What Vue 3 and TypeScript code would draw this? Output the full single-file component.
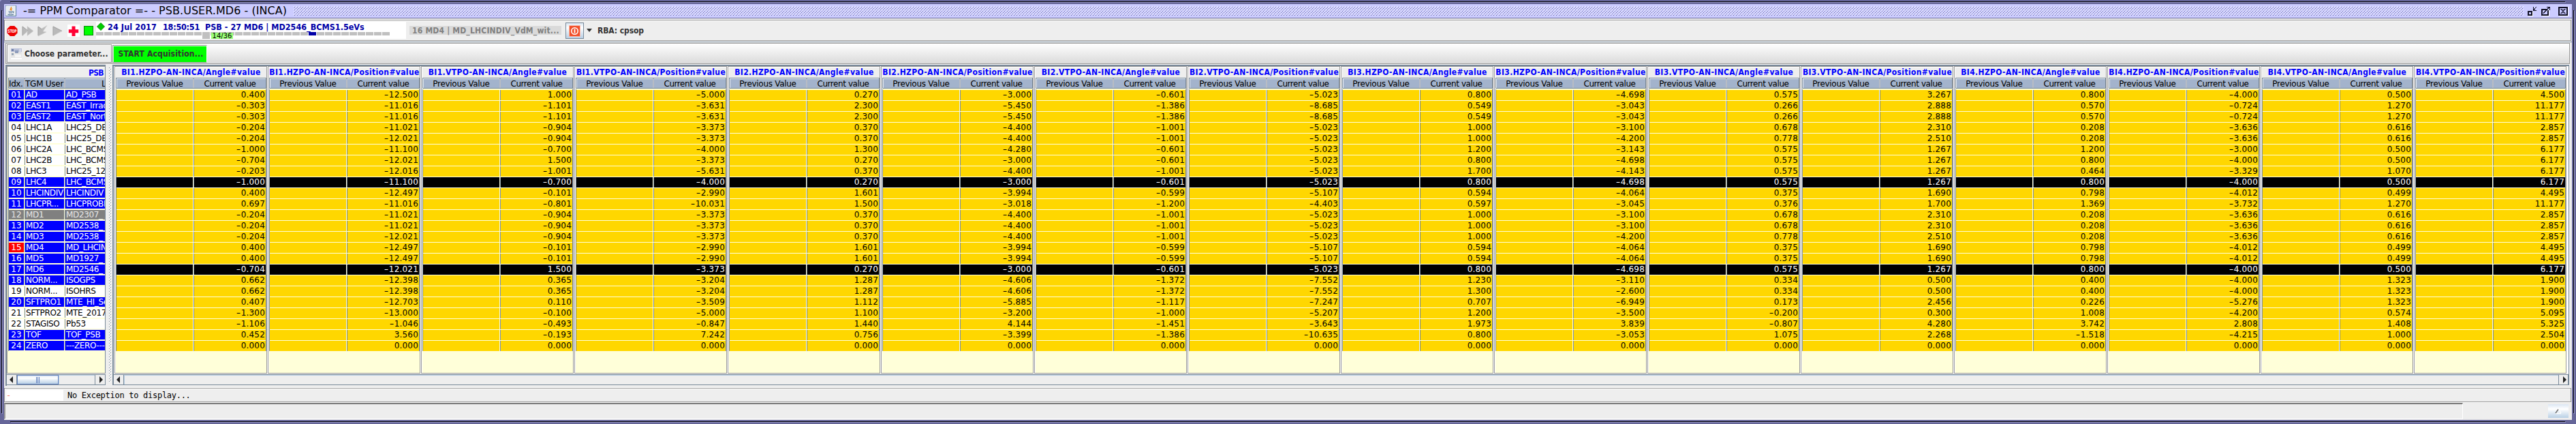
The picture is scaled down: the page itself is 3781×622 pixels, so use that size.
<script setup lang="ts">
interface User {
  idx: string
  name: string
  lsa: string
  tone: 'used' | 'free' | 'gray' | 'alert'
}
interface Panel {
  title: string
  values: { sign: string; digits: string }[]
}

const u = (idx: string, name: string, lsa: string, tone: User['tone'] = 'used'): User => ({ idx, name, lsa, tone })

const users: User[] = [
  u('01', 'AD', 'AD_PSB'),
  u('02', 'EAST1', 'EAST_Irrad'),
  u('03', 'EAST2', 'EAST_North'),
  u('04', 'LHC1A', 'LHC25_DB', 'free'),
  u('05', 'LHC1B', 'LHC25_DB', 'free'),
  u('06', 'LHC2A', 'LHC_BCMS', 'free'),
  u('07', 'LHC2B', 'LHC_BCMS', 'free'),
  u('08', 'LHC3', 'LHC25_12', 'free'),
  u('09', 'LHC4', 'LHC_BCMS'),
  u('10', 'LHCINDIV', 'LHCINDIV'),
  u('11', 'LHCPR...', 'LHCPROBE'),
  u('12', 'MD1', 'MD2307_', 'gray'),
  u('13', 'MD2', 'MD2538_'),
  u('14', 'MD3', 'MD2538_'),
  u('15', 'MD4', 'MD_LHCIN', 'alert'),
  u('16', 'MD5', 'MD1927_'),
  u('17', 'MD6', 'MD2546_'),
  u('18', 'NORM...', 'ISOGPS'),
  u('19', 'NORM...', 'ISOHRS', 'free'),
  u('20', 'SFTPRO1', 'MTE_HI_Se'),
  u('21', 'SFTPRO2', 'MTE_2017', 'free'),
  u('22', 'STAGISO', 'Pb53', 'free'),
  u('23', 'TOF', 'TOF_PSB'),
  u('24', 'ZERO', '---ZERO---'),
]

const columns: string[] = [
  '0.400 -0.303 -0.303 -0.204 -0.204 -1.000 -0.704 -0.203 -1.000 0.400 0.697 -0.204 -0.204 -0.204 0.400 0.400 -0.704 0.662 0.662 0.407 -1.300 -1.106 0.452 0.000',
  '-12.500 -11.016 -11.016 -11.021 -12.021 -11.100 -12.021 -12.016 -11.100 -12.497 -11.016 -11.021 -11.021 -12.021 -12.497 -12.497 -12.021 -12.398 -12.398 -12.703 -13.000 -1.046 3.560 0.000',
  '1.000 -1.101 -1.101 -0.904 -0.904 -0.700 1.500 -1.001 -0.700 -0.101 -0.801 -0.904 -0.904 -0.904 -0.101 -0.101 1.500 0.365 0.365 0.110 -0.100 -0.493 -0.193 0.000',
  '-5.000 -3.631 -3.631 -3.373 -3.373 -4.000 -3.373 -5.631 -4.000 -2.990 -10.031 -3.373 -3.373 -3.373 -2.990 -2.990 -3.373 -3.204 -3.204 -3.509 -5.000 -0.847 7.242 0.000',
  '0.270 2.300 2.300 0.370 0.370 1.300 0.270 0.370 0.270 1.601 1.500 0.370 0.370 0.370 1.601 1.601 0.270 1.287 1.287 1.112 1.100 1.440 0.756 0.000',
  '-3.000 -5.450 -5.450 -4.400 -4.400 -4.280 -3.000 -4.400 -3.000 -3.994 -3.018 -4.400 -4.400 -4.400 -3.994 -3.994 -3.000 -4.606 -4.606 -5.885 -3.200 4.144 -3.399 0.000',
  '-0.601 -1.386 -1.386 -1.001 -1.001 -0.601 -0.601 -1.001 -0.601 -0.599 -1.200 -1.001 -1.001 -1.001 -0.599 -0.599 -0.601 -1.372 -1.372 -1.117 -1.000 -1.451 -1.386 0.000',
  '-5.023 -8.685 -8.685 -5.023 -5.023 -5.023 -5.023 -5.023 -5.023 -5.107 -4.403 -5.023 -5.023 -5.023 -5.107 -5.107 -5.023 -7.552 -7.552 -7.247 -5.207 -3.643 -10.635 0.000',
  '0.800 0.549 0.549 1.000 1.000 1.200 0.800 1.700 0.800 0.594 0.597 1.000 1.000 1.000 0.594 0.594 0.800 1.230 1.300 0.707 1.200 1.973 0.800 0.000',
  '-4.698 -3.043 -3.043 -3.100 -4.200 -3.143 -4.698 -4.143 -4.698 -4.064 -3.045 -3.100 -3.100 -4.200 -4.064 -4.064 -4.698 -3.110 -2.600 -6.949 -3.500 3.839 -3.053 0.000',
  '0.575 0.266 0.266 0.678 0.778 0.575 0.575 0.575 0.575 0.375 0.376 0.678 0.678 0.778 0.375 0.375 0.575 0.334 0.334 0.173 -0.200 -0.807 1.075 0.000',
  '3.267 2.888 2.888 2.310 2.510 1.267 1.267 1.267 1.267 1.690 1.700 2.310 2.310 2.510 1.690 1.690 1.267 0.500 0.500 2.456 0.300 4.280 2.268 0.000',
  '0.800 0.570 0.570 0.208 0.208 1.200 0.800 0.464 0.800 0.798 1.369 0.208 0.208 0.208 0.798 0.798 0.800 0.400 0.400 0.226 1.008 3.742 -1.518 0.000',
  '-4.000 -0.724 -0.724 -3.636 -3.636 -3.000 -4.000 -3.329 -4.000 -4.012 -3.732 -3.636 -3.636 -3.636 -4.012 -4.012 -4.000 -4.000 -4.000 -5.276 -4.200 2.808 -4.215 0.000',
  '0.500 1.270 1.270 0.616 0.616 0.500 0.500 1.070 0.500 0.499 1.270 0.616 0.616 0.616 0.499 0.499 0.500 1.323 1.323 1.323 0.574 1.408 1.000 0.000',
  '4.500 11.177 11.177 2.857 2.857 6.177 6.177 6.177 6.177 4.495 11.177 2.857 2.857 2.857 4.495 4.495 6.177 1.900 1.900 1.900 5.095 5.325 2.504 0.000',
]

const panels: Panel[] = columns.map((c, i) => {
  const plane = i % 4 < 2 ? 'HZPO' : 'VTPO'
  const kind = i % 2 === 1 ? 'Position' : 'Angle'
  return {
    title: `BI${Math.floor(i / 4) + 1}.${plane}-AN-INCA/${kind}#value`,
    values: c.split(' ').map((v) => ({ sign: v.startsWith('-') ? '-' : '', digits: v.replace('-', '') })),
  }
})

const darkRows = [8, 16]
const cycles = Array.from({ length: 36 }, (_, i) => i)
</script>

<template>
  <div class="window">
    <svg class="frame" width="3781" height="622" shape-rendering="crispEdges">
      <path d="M15 2.5H3765M2.5 15V606M3777.5 15V606M15 618.5H3765" stroke="#000" fill="none" />
      <path d="M16 3.5H3766M3.5 16V607M3778.5 16V607M16 619.5H3766" stroke="#9999cc" fill="none" />
      <path d="M0 0.5H2M0.5 0V2" stroke="#9999cc" fill="none" />
    </svg>

    <header class="titlebar">
      <svg class="java" width="16" height="16" viewBox="0 0 16 16">
        <rect x=".5" y=".5" width="15" height="15" fill="#e8edf2" stroke="#5b7f95" />
        <path d="M1 15V1H15" fill="none" stroke="#fff" />
        <path d="M8.5 2c1 1.8-2.8 2.6-1 5M10 4.5c-1.6.8-2.2 1.4-1 3" fill="none" stroke="#f08a1c" stroke-width="1.3" />
        <path d="M4.5 9H10.5M5 11H10M10.5 9q3-.3.4 2.2M3.5 13.2q4 1 8.500 0" fill="none" stroke="#4c6f92" stroke-width="1.1" />
      </svg>
      <h1>-= PPM Comparator =- - PSB.USER.MD6 - (INCA)</h1>
      <svg class="bumps" width="3273" height="14" shape-rendering="crispEdges">
        <defs>
          <pattern id="bump" width="4" height="4" patternUnits="userSpaceOnUse">
            <path d="M0 0h1v1h-1zM2 2h1v1h-1z" fill="#fff" />
            <path d="M1 1h1v1h-1zM3 3h1v1h-1z" fill="#666699" />
          </pattern>
        </defs>
        <rect width="3273" height="14" fill="url(#bump)" />
      </svg>
      <svg class="winbtns" width="61" height="15" shape-rendering="crispEdges">
        <g fill="none" stroke="#fff">
          <path d="M2 14.5H8.5V8M22 14.5H32.5V5M47 14.5H60.5V1" />
        </g>
        <g fill="none" stroke="#111127">
          <path d="M1 8H8M2 7V14M1 13H8M7 7V14" stroke-width="2" />
          <path d="M9.500 1V6H14M10 5.500L14 1" />
          <path d="M29 5H22V13H31V6" stroke-width="2" />
          <path d="M24 10.500L33 1.500M29 1.500H34M33.500 1V6" />
          <path d="M47 2H59V13H47Z" stroke-width="2" />
          <path d="M50 4L56 11M56 4L50 11" stroke="#444466" stroke-width="2" />
        </g>
      </svg>
    </header>

    <section class="toolbar">
      <svg class="icons" width="130" height="22" viewBox="0 0 130 22">
        <path d="M7.900 4h6.200L18.500 8.300v6.200L14.100 19H7.900L3.500 14.500V8.300Z" fill="#ee0000" />
        <text x="11" y="13.900" text-anchor="middle" class="stop" textLength="13" lengthAdjust="spacingAndGlyphs">STOP</text>
        <g fill="#b9b9b9" stroke="#d0d0d0" stroke-width=".6">
          <path d="M26 4.500L34 11.500L26 18.500ZM33 4.500L42 11.500L33 18.500Z" />
          <path d="M49 4.500L54 8L62 3.500L56 12L61 13L49 19Z" />
          <path d="M71 4.500L84 11.500L71 18.500Z" />
        </g>
        <path d="M26 18V5L34 11M71 18V5L84 11.500M49 18V5L54 9" fill="none" stroke="#a0a0a0" />
        <rect x="92" y="2" width="18" height="18" fill="#fff" />
        <path d="M98.500 4.500h5v4.700h4.700v5h-4.700v4.800h-5v-4.800h-4.700v-5h4.700z" fill="#ff0033" />
        <rect x="116.500" y="4.500" width="13" height="13" fill="#00ff00" stroke="#008800" />
      </svg>

      <div class="cycle">
        <div class="cycle-text">
          <svg width="12" height="12" viewBox="0 0 12 12">
            <path d="M6 .5L11.500 6L6 11.500L.5 6Z" fill="#00cc00" stroke="#009000" />
          </svg>
          <b class="date">24 Jul 2017</b>
          <b class="time">18:50:51</b>
          <b class="beam">PSB - 27 MD6 | MD2546_BCMS1.5eVs</b>
        </div>
        <div class="segments">
          <i v-for="n in cycles" :key="n" :class="{ tall: n === 13, now: n === 26 }"></i>
          <span class="count">14/36</span>
        </div>
      </div>

      <div class="next">16 MD4 | MD_LHCINDIV_VdM_wit...</div>
      <div class="rba">
        <svg width="17" height="17" viewBox="0 0 17 17">
          <rect x=".5" y=".5" width="16" height="16" fill="#f2502a" stroke="#f9b9a8" />
          <circle cx="8.500" cy="8.500" r="4.700" fill="none" stroke="#fff" stroke-width="1.600" />
          <path d="M8.500 5.500v6" stroke="#fff" stroke-width="1.800" />
        </svg>
      </div>
      <svg class="caret" width="8" height="5"><path d="M0 0H8L4 5Z" fill="#333" /></svg>
      <b class="rba-text">RBA: cpsop</b>
    </section>

    <div class="rule"></div>

    <section class="actions">
      <button class="choose" type="button">
        <svg width="16" height="16" viewBox="0 0 16 16">
          <rect width="16" height="16" fill="#e6e6e6" />
          <rect width="16" height="5" fill="#b9c0d8" />
          <rect x="1" y="1" width="3" height="3" fill="#6f7fa8" />
          <rect x="6" y="3" width="5" height="4" fill="#8f9dbc" />
          <rect x="12" y="1" width="3" height="5" fill="#d4d8e6" />
          <rect x="1" y="7" width="3" height="3" fill="#9aa7b8" />
          <rect x="6" y="9" width="9" height="4" fill="#f6f6f6" />
          <rect y="14" width="16" height="2" fill="#fff" />
        </svg>
        <span>Choose parameter...</span>
      </button>
      <button class="start" type="button">START Acquisition...</button>
    </section>

    <main class="split">
      <div class="left">
        <div class="users">
          <div class="users-title">PSB</div>
          <div class="users-head">
            <span class="c-idx">Idx.</span><span class="c-name">TGM User</span><span class="c-lsa">L</span>
          </div>
          <div v-for="row in users" :key="row.idx" class="urow" :class="row.tone">
            <span class="c-idx">{{ row.idx }}</span><span class="c-name">{{ row.name }}</span><span class="c-lsa">{{ row.lsa }}</span>
          </div>
        </div>
        <div class="scroll">
          <svg class="arrow" width="15" height="14"><path d="M9 2V12L4 7Z" fill="#222" /></svg>
          <div class="thumb"><i></i><i></i><i></i></div>
          <div class="track"></div>
          <svg class="arrow end" width="16" height="14"><path d="M6 2V12L11 7Z" fill="#222" /></svg>
        </div>
      </div>

      <svg class="divider" width="9" height="470" shape-rendering="crispEdges">
        <defs>
          <pattern id="dots" x="5" y="4" width="4" height="4" patternUnits="userSpaceOnUse">
            <path d="M0 0h1v1h-1zM2 2h1v1h-1z" fill="#7a8a99" />
            <path d="M1 1h1v1h-1zM3 3h1v1h-1z" fill="#fff" />
          </pattern>
        </defs>
        <rect x="5" y="3" width="4" height="463" fill="url(#dots)" />
      </svg>

      <div class="right">
        <div class="panels">
          <article v-for="p in panels" :key="p.title" class="panel">
            <h2>{{ p.title }}</h2>
            <div class="phead"><span>Previous Value</span><span>Current value</span></div>
            <div v-for="(v, i) in p.values" :key="i" class="prow" :class="{ dark: darkRows.includes(i) }">
              <span></span><span class="num"><i v-if="v.sign">{{ v.sign }}</i>{{ v.digits }}</span>
            </div>
          </article>
        </div>
        <div class="scroll wide">
          <svg class="arrow" width="15" height="14"><path d="M9 2V12L4 7Z" fill="#222" /></svg>
          <div class="track"></div>
          <svg class="arrow end" width="15" height="14"><path d="M6 2V12L11 7Z" fill="#222" /></svg>
        </div>
      </div>
    </main>

    <section class="exceptions">
      <span class="flag">-</span>
      <span>No Exception to display...</span>
    </section>

    <footer class="status">
      <div class="message"></div>
      <div class="expand">
        <svg width="10" height="9" viewBox="0 0 10 9">
          <path d="M1 7.500H9M6 2L9 7" stroke="#fff" fill="none" stroke-width="1.300" />
          <path d="M1 7L5 1.500" stroke="#666" fill="none" stroke-width="1.300" />
        </svg>
      </div>
    </footer>
  </div>
</template>

<style>
body {
  background: #666699;
  overflow: hidden;
}
</style>

<style scoped>
* {
  box-sizing: border-box;
}
.window {
  position: relative;
  width: 3781px;
  height: 622px;
  padding: 6px;
  display: flex;
  flex-direction: column;
  background: linear-gradient(#eee, #eee) content-box, #666699;
  font: 12px "DejaVu Sans", sans-serif;
  color: #000;
  white-space: pre;
  overflow: hidden;
}
.frame {
  position: absolute;
  left: 0;
  top: 0;
}
svg {
  flex: none;
  display: block;
}

/* title bar */
.titlebar {
  flex: none;
  height: 21px;
  display: flex;
  background: #ccccff;
  border-bottom: 1px solid #666699;
  padding-left: 2px;
}
.java {
  margin-top: 2px;
}
h1 {
  margin: 0 0 0 10px;
  width: 397px;
  font-size: 16px;
  line-height: 20px;
  font-weight: normal;
  letter-spacing: 0.04px;
}
.bumps {
  margin-top: 3px;
}
.winbtns {
  margin: 3px 0 0 5px;
}

/* main toolbar */
.toolbar {
  flex: none;
  height: 31px;
  margin: 2px 1px 0 0;
  border: 1px solid #999;
  box-shadow: inset 1px 1px #fff, 0 1px #fff;
  display: flex;
}
.icons {
  margin: 4px 0 0 0;
}
.stop {
  font: bold 6.5px "DejaVu Sans Condensed", "DejaVu Sans", sans-serif;
  fill: #fff;
}
.cycle {
  margin: 2px 0 0 4px;
  width: 455px;
  height: 25px;
  background: #fff;
  color: #0000a8;
}
.cycle-text {
  height: 15px;
  display: flex;
  padding-left: 1px;
}
.cycle-text svg {
  margin-top: 1px;
}
.cycle-text b {
  font: bold 12.5px/15px "DejaVu Sans Condensed", "DejaVu Sans", sans-serif;
}
.date {
  margin-left: 4px;
  width: 81px;
  letter-spacing: 0.1px;
}
.time {
  width: 62px;
  letter-spacing: -0.24px;
}
.beam {
  letter-spacing: 0;
}
.segments {
  position: relative;
  display: flex;
  gap: 1px;
}
.segments i {
  width: 11px;
  height: 5px;
  background: #c0c0c0;
}
.segments i.tall {
  height: 10px;
}
.segments i.now {
  background: #0000a8;
}
.count {
  position: absolute;
  left: 169px;
  top: 1px;
  width: 32px;
  height: 9px;
  background: #99ff77;
  color: #000;
  font-size: 10px;
  line-height: 9px;
  text-align: center;
}
.next {
  margin: 8px 0 0 5px;
  width: 223px;
  height: 13px;
  padding-left: 4px;
  background: #dadada;
  color: #808080;
  font: bold 12px/14px "DejaVu Sans Condensed", "DejaVu Sans", sans-serif;
  letter-spacing: 0.2px;
}
.rba {
  margin: 3px 0 0 6px;
  width: 27px;
  height: 24px;
  border: 1px solid #7a8a99;
  background: linear-gradient(#dbe6f2, #fff 30%, #b8cfe5);
  padding: 3px 0 0 4px;
}
.caret {
  margin: 12px 0 0 4px;
}
.rba-text {
  margin-left: 8px;
  font: bold 12px/30px "DejaVu Sans Condensed", "DejaVu Sans", sans-serif;
  letter-spacing: -0.09px;
  color: #333;
}
.rule {
  flex: none;
  height: 1px;
  margin-top: 1px;
  background: #7a8a99;
}

/* action buttons */
.actions {
  flex: none;
  height: 31px;
  margin: 1px 3px 0 2px;
  border: 1px solid #999;
  box-shadow: 0 1px #fff;
  background: linear-gradient(#fff, #dadada);
  display: flex;
}
button {
  border: 0;
  border-radius: 0;
  padding: 0;
  margin: 0;
  font: bold 12px "DejaVu Sans Condensed", "DejaVu Sans", sans-serif;
  color: #333;
}
.choose {
  margin: 1px 0 0 1px;
  width: 154px;
  height: 27px;
  display: flex;
  align-items: center;
  gap: 4px;
  padding-left: 5px;
  border: 1px solid #999;
  background: #eee;
  box-shadow: inset 1px 1px #fff;
  letter-spacing: 0;
}
.start {
  margin: 2px 0 0 1px;
  width: 139px;
  height: 26px;
  background: #0f0;
  border: 1px solid #999;
  border-right-color: #fff;
  box-shadow: inset 1px 1px #ccffcc;
  letter-spacing: 0.16px;
  padding-left: 3px;
}

/* split pane */
.split {
  flex: none;
  height: 471px;
  margin: 1px 4px 0 2px;
  display: flex;
}
.left {
  width: 147px;
  border-top: 2px solid #7a8a99;
  border-left: 2px solid #7a8a99;
  overflow: hidden;
}
.users {
  width: 145px;
  height: 451px;
  background: #ffffd9;
  border-left: 1px solid #999;
  border-top: 1px solid #999;
  border-bottom: 1px solid #999;
  border-right: 1px solid #7a8a99;
}
.users-title {
  height: 16px;
  background: #eee;
  border-top: 1px solid #fff;
  border-left: 1px solid #fff;
  padding-right: 2px;
  text-align: right;
  color: #0000ff;
  font: bold 12px/16px "DejaVu Sans Condensed", "DejaVu Sans", sans-serif;
  letter-spacing: -0.6px;
}
.users-head,
.urow {
  height: 16px;
  margin-left: 1px;
  border-left: 1px solid #7a8a99;
  display: grid;
  grid-template-columns: 24px 59px 58px;
  line-height: 16px;
}
.users-head {
  background: #a3b3cc;
  border-top: 1px solid #7a8a99;
  border-bottom: 1px solid #7a8a99;
  box-shadow: inset 0 1px #e8eef6;
  margin-bottom: 1px;
}
.users-head .c-idx,
.users-head .c-name {
  height: 14px;
  border-right: 2px solid #b8bcc4;
}
.users-head .c-idx {
  letter-spacing: -0.4px;
}
.users-head .c-name {
  letter-spacing: -0.25px;
}
.users-head .c-lsa {
  overflow: hidden;
  padding-left: 53px;
}
.urow span {
  overflow: hidden;
  height: 16px;
  padding-left: 1px;
  border-top: 1px solid #ffffd9;
  border-bottom: 1px solid #ffffd9;
  line-height: 15px;
  background: linear-gradient(to left, #7a8a99 1px, #ffffd9 1px, #ffffd9 2px, var(--cell) 2px);
  background-clip: padding-box;
  letter-spacing: -0.35px;
}
.urow .c-idx {
  text-align: center;
  background: linear-gradient(to left, #7a8a99 1px, #ffffd9 1px, #ffffd9 2px, var(--flag, var(--cell)) 2px);
  background-clip: padding-box;
  letter-spacing: 0.1px;
  padding-right: 3px;
}
.urow .c-lsa {
  background: var(--cell);
  background-clip: padding-box;
}
.used {
  --cell: #0000ff;
  color: #fff;
}
.free {
  --cell: #fff;
}
.gray {
  --cell: #808080;
  color: #e8e8e8;
}
.alert {
  --cell: #0000ff;
  --flag: #ff0000;
  color: #fff;
}
.scroll {
  height: 16px;
  margin-top: 1px;
  border-top: 1px solid #7a8a99;
  border-bottom: 1px solid #7a8a99;
  display: flex;
}
.arrow {
  background: #eee;
  border-right: 1px solid #7a8a99;
}
.arrow.end {
  border-left: 1px solid #7a8a99;
}
.thumb {
  width: 61px;
  border: 1px solid #6382bf;
  background: linear-gradient(#dbe6f3, #fff 30%, #b8cfe5);
  display: flex;
  justify-content: center;
  align-items: center;
  gap: 1px;
}
.thumb i {
  width: 1px;
  height: 9px;
  background: #6382bf;
}
.track {
  flex: 1;
  background: #eee;
  box-shadow: inset 1px 1px #b8cfe5;
}
.divider {
  width: 10px;
}
.right {
  flex: none;
  width: 3606px;
  border-top: 2px solid #7a8a99;
  border-left: 2px solid #7a8a99;
  border-right: 1px solid #7a8a99;
  background: #eee;
  height: 470px;
}
.panels {
  height: 451px;
  display: flex;
  gap: 1px;
  padding-left: 1px;
  background: #fff;
  overflow: hidden;
}
.panel {
  flex: none;
  width: 224px;
  height: 451px;
  border: 1px solid #999;
  background: #ffffd9;
  box-shadow: inset 1px 1px #fff;
}
h2 {
  margin: 1px 0 0 1px;
  height: 15px;
  background: #eee;
  color: #0000ff;
  text-align: center;
  font: bold 12px/15px "DejaVu Sans Condensed", "DejaVu Sans", sans-serif;
  letter-spacing: 0.36px;
}
.phead,
.prow {
  margin-left: 1px;
  height: 16px;
  border-left: 1px solid #7a8a99;
  border-right: 1px solid #7a8a99;
  display: grid;
  grid-template-columns: 114px 105px;
}
.phead {
  background: #a3b3cc;
  border: 1px solid #7a8a99;
  box-shadow: inset 1px 1px #e8eef6;
  margin-bottom: 1px;
}
.phead span {
  height: 14px;
  text-align: center;
  line-height: 16px;
  letter-spacing: -0.29px;
}
.phead span:first-child {
  border-right: 2px solid #b8bcc4;
}
.phead span:last-child {
  letter-spacing: -0.43px;
}
.prow span {
  border-top: 1px solid #ffffd9;
  border-bottom: 1px solid #ffffd9;
  background: #ffd700;
  background-clip: padding-box;
}
.prow span:first-child {
  background: linear-gradient(to left, #7a8a99 1px, #ffffd9 1px, #ffffd9 2px, #ffd700 2px);
  background-clip: padding-box;
}
.prow .num {
  text-align: right;
  line-height: 15px;
  padding-right: 1px;
  letter-spacing: 0.2px;
}
.num i {
  display: inline-block;
  font-style: normal;
  margin-right: 1.6px;
  transform: scaleX(1.5);
}
.prow.dark span {
  background: #000;
  background-clip: padding-box;
  color: #fff;
}
.prow.dark span:first-child {
  background: linear-gradient(to left, #7a8a99 1px, #ffffd9 1px, #ffffd9 2px, #000 2px);
  background-clip: padding-box;
}

/* bottom bars */
.exceptions {
  flex: none;
  height: 21px;
  margin: 3px 1px 0 0;
  border: 1px solid #999;
  box-shadow: inset 1px 1px #fff, 0 1px #fff, 0 -1px #fff;
  display: flex;
  gap: 6px;
  padding: 2px 0 0 2px;
  font: 12px/16px "DejaVu Sans Mono", monospace;
  letter-spacing: -0.28px;
}
.flag {
  width: 84px;
  height: 16px;
  background: #fff;
  color: #fa8072;
}
.status {
  flex: none;
  height: 25px;
  margin-top: 1px;
  display: flex;
}
.message {
  width: 3609px;
  height: 24px;
  border-top: 2px solid #7b7b7b;
  border-left: 2px solid #999;
  border-right: 1px solid #fff;
  border-bottom: 1px solid #fff;
}
.expand {
  margin: 2px 0 0 125px;
  width: 30px;
  height: 20px;
  background: linear-gradient(#dbe6f3, #fff 35%, #b8cfe5);
  display: flex;
  justify-content: center;
  align-items: center;
}
</style>
